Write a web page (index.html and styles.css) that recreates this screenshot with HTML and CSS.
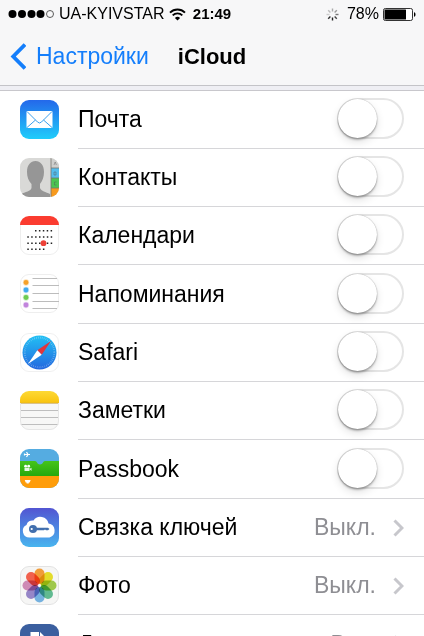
FILE: index.html
```html
<!DOCTYPE html>
<html lang="ru">
<head>
    <meta charset="UTF-8">
    <meta name="viewport" content="width=device-width, initial-scale=1.0">
    <title>iCloud</title>
    <link rel="stylesheet" href="styles.css">
</head>
<body>
    <header class="header">
        <div class="status-bar">
            <div class="status-left">
                <svg class="signal" width="47" height="10" viewBox="0 0 47 10">
                    <g fill="#000">
                        <circle cx="4.500" cy="5" r="4"/>
                        <circle cx="14" cy="5" r="4"/>
                        <circle cx="23.500" cy="5" r="4"/>
                        <circle cx="32.500" cy="5" r="4"/>
                    </g>
                    <circle cx="42" cy="5" r="3.500" fill="none" stroke="#333" stroke-width="0.800"/>
                </svg>
                <span>UA-KYIVSTAR</span>
                <svg class="wifi" width="17" height="13" viewBox="0 0 17 13" fill="none" stroke="#000" stroke-width="1.900">
                    <path d="M1 4.600C5.200 0.400 11.800 0.400 16 4.600"/>
                    <path d="M3.700 7.400C6.400 4.700 10.600 4.700 13.300 7.400"/>
                    <path d="M8.500 12.500L5.900 9.900C7.300 8.500 9.700 8.500 11.100 9.900Z" fill="#000" stroke="none"/>
                </svg>
            </div>
            <span class="time">21:49</span>
            <div class="status-right">
                <svg class="spinner" width="13" height="13" viewBox="-6.5 -6.5 13 13" stroke-width="1.400">
                    <path d="M0 -3V-6" stroke="#aaa"/>
                    <path d="M2.100 -2.100L4.300 -4.300" stroke="#999"/>
                    <path d="M3 0H6" stroke="#777"/>
                    <path d="M2.100 2.100L4.300 4.300" stroke="#444"/>
                    <path d="M0 3V6" stroke="#222"/>
                    <path d="M-2.100 2.100L-4.300 4.300" stroke="#333"/>
                    <path d="M-3 0H-6" stroke="#ccc"/>
                    <path d="M-2.100 -2.100L-4.300 -4.300" stroke="#bbb"/>
                </svg>
                <span>78%</span>
                <svg class="battery" width="33" height="13" viewBox="0 0 33 13">
                    <rect x="0.500" y="0.500" width="29" height="12" rx="1.800" fill="#fff" stroke="#333"/>
                    <rect x="1.500" y="1.500" width="21.500" height="10" rx="0.500" fill="#000"/>
                    <path d="M31 4.300C33 4.500 33 8.500 31 8.700Z" fill="#000"/>
                </svg>
            </div>
        </div>
        <nav class="nav-bar">
            <a class="back" href="#">
                <svg width="16" height="27" viewBox="0 0 16 27" fill="none" stroke="#147efb" stroke-width="3.800">
                    <path d="M15 1.500L3.200 13.500L15 25.500"/>
                </svg>
                Настройки
            </a>
            <h1 class="title">iCloud</h1>
        </nav>
    </header>

    <main class="content">
        <ul class="list">
            <li class="row">
                <svg class="icon" viewBox="0 0 39 39">
                    <defs>
                        <linearGradient id="mail" x2="0" y2="1">
                            <stop offset="0" stop-color="#2468ea"/>
                            <stop offset="1" stop-color="#1fcdfb"/>
                        </linearGradient>
                    </defs>
                    <rect width="39" height="39" rx="9" fill="url(#mail)"/>
                    <rect x="6.500" y="11" width="26" height="17" rx="1" fill="#fff"/>
                    <path d="M7 11.500L17.500 22Q19.500 24 21.500 22L32 11.500M7 27.500L15.500 20M32 27.500L23.500 20" fill="none" stroke="#3aa0ee" stroke-width="1"/>
                </svg>
                <div class="cell">
                    <label class="name" for="mailSwitch">Почта</label>
                    <input class="switch" type="checkbox" id="mailSwitch">
                </div>
            </li>
            <li class="row">
                <svg class="icon" viewBox="0 0 39 39">
                    <clipPath id="round"><rect width="39" height="39" rx="9"/></clipPath>
                    <g clip-path="url(#round)">
                        <rect width="39" height="39" fill="#d9d9d7"/>
                        <path d="M1 39V36C5 34 11 33 11.500 30V26C8.500 23 7 19 7 14C7 7 10.500 3 15.500 3C20.500 3 24 7 24 14C24 19 22.500 23 20 26V30C21 33 26 34 30 36V39Z" fill="#969696"/>
                        <rect x="31" width="8" height="10" fill="#cfcfcd"/>
                        <rect x="31" y="10" width="8" height="10" fill="#55bdec"/>
                        <rect x="31" y="20" width="8" height="10" fill="#4cc552"/>
                        <rect x="31" y="30" width="8" height="9" fill="#f79a1e"/>
                        <path d="M31 0V39M31 10H39M31 20H39M31 30H39" stroke="#77736d" stroke-width="0.800"/>
                        <path d="M34 7L35.200 4L36.400 7M34 14H36V17H34ZM36.500 24H34.500V27H36.500" stroke="#555" stroke-width="0.700" fill="none" opacity="0.600"/>
                    </g>
                </svg>
                <div class="cell">
                    <label class="name" for="contactsSwitch">Контакты</label>
                    <input class="switch" type="checkbox" id="contactsSwitch">
                </div>
            </li>
            <li class="row">
                <svg class="icon" viewBox="0 0 39 39">
                    <g clip-path="url(#round)">
                        <rect width="39" height="39" fill="#fff"/>
                        <rect width="39" height="9" fill="#fb3c30"/>
                    </g>
                    <path d="M0.500 9V30A8.500 8.500 0 0 0 9 38.500H30A8.500 8.500 0 0 0 38.500 30V9" fill="none" stroke="#eee"/>
                    <g stroke="#222" stroke-width="1.500" stroke-dasharray="1.500 2.400">
                        <path d="M15 14.700H33"/>
                        <path d="M7.300 21H33"/>
                        <path d="M7.300 27.200H33"/>
                        <path d="M7.300 33.300H25"/>
                    </g>
                    <circle cx="23.500" cy="27.200" r="2.900" fill="#ed4138"/>
                </svg>
                <div class="cell">
                    <label class="name" for="calendarSwitch">Календари</label>
                    <input class="switch" type="checkbox" id="calendarSwitch">
                </div>
            </li>
            <li class="row">
                <svg class="icon" viewBox="0 0 39 39">
                    <rect x="0.500" y="0.500" width="38" height="38" rx="8.500" fill="#fff" stroke="#eee"/>
                    <path d="M12.500 4.500H37M12.500 11.500H39M12.500 19.500H39M12.500 27.500H39M12.500 34.500H37" stroke="#b4b4b4" stroke-width="0.900"/>
                    <g stroke-opacity="0.350" stroke-width="1.500">
                        <circle cx="6" cy="8.500" r="2.400" fill="#f6a22b" stroke="#f6a22b"/>
                        <circle cx="6" cy="16" r="2.400" fill="#41aaf0" stroke="#41aaf0"/>
                        <circle cx="6" cy="23.500" r="2.400" fill="#6dcc53" stroke="#6dcc53"/>
                        <circle cx="6" cy="31" r="2.400" fill="#c184dc" stroke="#c184dc"/>
                    </g>
                </svg>
                <div class="cell">
                    <label class="name" for="remindersSwitch">Напоминания</label>
                    <input class="switch" type="checkbox" id="remindersSwitch">
                </div>
            </li>
            <li class="row">
                <svg class="icon" viewBox="0 0 39 39">
                    <defs>
                        <linearGradient id="compass" x2="0" y2="1">
                            <stop offset="0" stop-color="#22c0f4"/>
                            <stop offset="1" stop-color="#2367df"/>
                        </linearGradient>
                    </defs>
                    <rect x="0.500" y="0.500" width="38" height="38" rx="8.500" fill="#fff" stroke="#f0f0f0"/>
                    <circle cx="19.500" cy="19.500" r="17" fill="url(#compass)"/>
                    <circle cx="19.500" cy="19.500" r="14.800" fill="none" stroke="#fff" stroke-width="1.800" stroke-dasharray="0.500 1.440" opacity="0.450"/>
                    <path d="M31 8L17.300 17.300L21.700 21.700Z" fill="#e3343b"/>
                    <path d="M8 31L17.300 17.300L21.700 21.700Z" fill="#fff"/>
                </svg>
                <div class="cell">
                    <label class="name" for="safariSwitch">Safari</label>
                    <input class="switch" type="checkbox" id="safariSwitch">
                </div>
            </li>
            <li class="row">
                <svg class="icon" viewBox="0 0 39 39">
                    <defs>
                        <linearGradient id="notes" x2="0" y2="1">
                            <stop offset="0" stop-color="#fdd935"/>
                            <stop offset="1" stop-color="#f9c30d"/>
                        </linearGradient>
                    </defs>
                    <g clip-path="url(#round)">
                        <rect width="39" height="39" fill="#f7f7f6"/>
                        <rect width="39" height="12" fill="url(#notes)"/>
                        <path d="M0 12.300H39" stroke="#c8a44d" stroke-width="0.800"/>
                        <path d="M0 19.500H39M0 26.500H39M0 33.500H39" stroke="#bebebe"/>
                    </g>
                    <path d="M0.500 12V30A8.500 8.500 0 0 0 9 38.500H30A8.500 8.500 0 0 0 38.500 30V12" fill="none" stroke="#e6e6e6"/>
                </svg>
                <div class="cell">
                    <label class="name" for="notesSwitch">Заметки</label>
                    <input class="switch" type="checkbox" id="notesSwitch">
                </div>
            </li>
            <li class="row">
                <svg class="icon" viewBox="0 0 39 39">
                    <defs>
                        <linearGradient id="pass" x2="0" y2="1">
                            <stop offset="0" stop-color="#45c41a"/>
                            <stop offset="1" stop-color="#26a80d"/>
                        </linearGradient>
                    </defs>
                    <g clip-path="url(#round)">
                        <rect width="39" height="39" fill="#55ace1"/>
                        <path d="M0 12H15C17 12 17 15.500 20 15.500S23 12 25 12H39V27H0Z" fill="url(#pass)"/>
                        <rect y="27" width="39" height="12" fill="#ff9d0a"/>
                    </g>
                    <path d="M4 5.500H10M6.500 3L8 5.500L6.500 8M4.500 4.500V6.500" stroke="#fff" stroke-width="1.200" fill="none"/>
                    <circle cx="5.600" cy="17.200" r="1.400" fill="#fff"/>
                    <circle cx="8.700" cy="17.200" r="1.400" fill="#fff"/>
                    <path d="M4.500 18.800H9.500V22H4.500ZM9.500 20L11.500 18.800V22Z" fill="#e9f7e4"/>
                    <path d="M4.700 31H10.700L9.700 33.500H8.800V34.500H6.600V33.500H5.700Z" fill="#fff"/>
                </svg>
                <div class="cell">
                    <label class="name" for="passbookSwitch">Passbook</label>
                    <input class="switch" type="checkbox" id="passbookSwitch">
                </div>
            </li>
            <li class="row">
                <svg class="icon" viewBox="0 0 39 39">
                    <defs>
                        <linearGradient id="keychain" x2="0" y2="1">
                            <stop offset="0" stop-color="#5254d2"/>
                            <stop offset="1" stop-color="#48b5ef"/>
                        </linearGradient>
                    </defs>
                    <rect width="39" height="39" rx="9" fill="url(#keychain)"/>
                    <path d="M9.500 29.500A6.600 6.600 0 0 1 6.500 17A6 6 0 0 1 13.500 12.500A8.300 8.300 0 0 1 28.500 15.500A7.200 7.200 0 0 1 29.500 29.500Z" fill="#fff"/>
                    <circle cx="13" cy="21" r="4" fill="#426fae"/>
                    <circle cx="11.700" cy="21" r="1.100" fill="#fff"/>
                    <path d="M16 19.700H28L29.500 21L28 22.300H26L25 21.600L24 22.300H16Z" fill="#426fae"/>
                </svg>
                <a class="cell" href="#">
                    <span class="name">Связка ключей</span>
                    <span class="value">Выкл.</span>
                    <svg class="chevron" width="11" height="18" viewBox="0 0 11 18"><path d="M1.500 1.500L9 9L1.500 16.500"/></svg>
                </a>
            </li>
            <li class="row">
                <svg class="icon" viewBox="0 0 39 39">
                    <rect x="0.500" y="0.500" width="38" height="38" rx="8.500" fill="#f6f6f5" stroke="#e3e3e3"/>
                    <g class="petals">
                        <rect x="14.500" y="2.500" width="10" height="15.500" rx="5" fill="#f9a23b"/>
                        <rect x="14.500" y="2.500" width="10" height="15.500" rx="5" fill="#ece42c" transform="rotate(45 19.500 19.500)"/>
                        <rect x="14.500" y="2.500" width="10" height="15.500" rx="5" fill="#a5d04f" transform="rotate(90 19.500 19.500)"/>
                        <rect x="14.500" y="2.500" width="10" height="15.500" rx="5" fill="#64c197" transform="rotate(135 19.500 19.500)"/>
                        <rect x="14.500" y="2.500" width="10" height="15.500" rx="5" fill="#79b8e8" transform="rotate(180 19.500 19.500)"/>
                        <rect x="14.500" y="2.500" width="10" height="15.500" rx="5" fill="#9c8bcf" transform="rotate(225 19.500 19.500)"/>
                        <rect x="14.500" y="2.500" width="10" height="15.500" rx="5" fill="#d68fbd" transform="rotate(270 19.500 19.500)"/>
                        <rect x="14.500" y="2.500" width="10" height="15.500" rx="5" fill="#fa6450" transform="rotate(315 19.500 19.500)"/>
                    </g>
                </svg>
                <a class="cell" href="#">
                    <span class="name">Фото</span>
                    <span class="value">Выкл.</span>
                    <svg class="chevron" width="11" height="18" viewBox="0 0 11 18"><path d="M1.500 1.500L9 9L1.500 16.500"/></svg>
                </a>
            </li>
            <li class="row">
                <svg class="icon" viewBox="0 0 39 39">
                    <rect width="39" height="39" rx="9" fill="#3b5f9f"/>
                    <path d="M10.500 8H20L25 13V31H10.500Z" fill="#fff"/>
                    <path d="M19.500 8V13.500H25" fill="none" stroke="#3b5f9f"/>
                </svg>
                <a class="cell" href="#">
                    <span class="name">Документы и данные</span>
                    <span class="value">Вкл.</span>
                    <svg class="chevron" width="11" height="18" viewBox="0 0 11 18"><path d="M1.500 1.500L9 9L1.500 16.500"/></svg>
                </a>
            </li>
        </ul>
    </main>
</body>
</html>
```
FILE: styles.css
```css
* {
    box-sizing: border-box;
}

body {
    font-family: 'Liberation Sans', Arial, sans-serif;
    background-color: #efeff4;
    margin: 0;
    height: 100vh;
    display: flex;
    flex-direction: column;
    overflow: hidden;
    color: #000;
}

.header {
    flex: none;
    background-color: #f7f7f8;
    border-bottom: 1px solid #c4c4c8;
}

/* Status bar */
.status-bar {
    display: grid;
    grid-template-columns: 1fr auto 1fr;
    align-items: center;
    height: 28px;
    padding: 0 8px;
    font-size: 16px;
    line-height: 20px;
}

.status-left,
.status-right {
    display: flex;
    align-items: center;
    gap: 4px;
}

.status-right {
    justify-content: flex-end;
}

.time {
    font-size: 15px;
    font-weight: bold;
}

.spinner {
    margin-right: 4px;
}

/* Navigation bar */
.nav-bar {
    display: grid;
    grid-template-columns: 1fr auto 1fr;
    align-items: center;
    height: 57px;
    padding: 0 10px;
}

.back {
    display: flex;
    align-items: center;
    gap: 10px;
    font-size: 23px;
    color: #147efb;
    text-decoration: none;
}

.title {
    margin: 0;
    font-size: 22px;
    font-weight: bold;
}

/* Settings list */
.content {
    flex: 1;
    min-height: 0;
    padding-top: 4px;
    overflow: hidden;
}

.list {
    list-style: none;
    margin: 0;
    padding: 0;
    background-color: #fff;
    border-top: 1px solid #c8c7cc;
}

.row {
    display: flex;
    align-items: center;
    gap: 19px;
    height: 58px;
    padding-left: 20px;
}

.row:nth-child(3n+4) {
    height: 59px;
}

.icon {
    flex: none;
    width: 39px;
    height: 39px;
    margin-bottom: 2px;
}

.cell {
    flex: 1;
    align-self: stretch;
    display: flex;
    align-items: center;
    padding-right: 20px;
    border-bottom: 1px solid #d6d6d9;
    color: #000;
    font-size: 23px;
    text-decoration: none;
}

.name {
    flex: 1;
    white-space: nowrap;
}

.value {
    margin-right: 17px;
    color: #8e8e93;
}

.chevron {
    fill: none;
    stroke: #c7c7cc;
    stroke-width: 3px;
}

.switch {
    appearance: none;
    flex: none;
    width: 67px;
    height: 41px;
    margin: 0 0 2px;
    border: 2px solid #e5e5e5;
    border-radius: 21px;
    background-color: #fff;
    cursor: pointer;
}

.switch::before {
    content: '';
    display: block;
    width: 39px;
    height: 39px;
    margin: -1px;
    border-radius: 50%;
    background-color: #fff;
    box-shadow: 0 0 1px rgba(0, 0, 0, 0.4), 0 2px 2px rgba(0, 0, 0, 0.25), 0 4px 9px rgba(0, 0, 0, 0.12);
}

.switch:checked {
    background-color: #4cd964;
    border-color: #4cd964;
}

.switch:checked::before {
    margin-left: 25px;
}

.petals rect {
    mix-blend-mode: multiply;
}
```
